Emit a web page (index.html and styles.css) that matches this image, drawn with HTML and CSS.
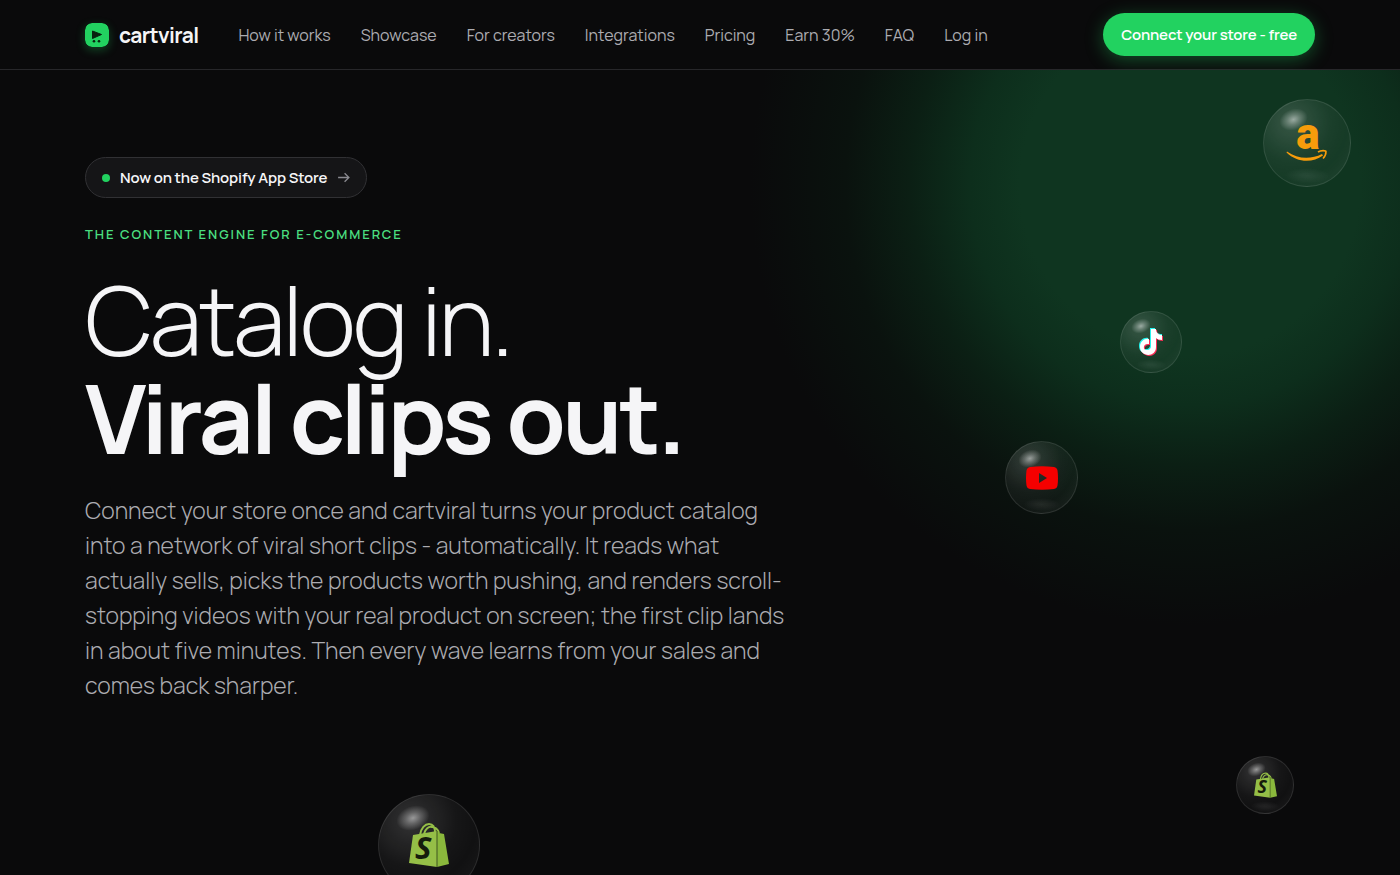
FILE: index.html
```html
<!DOCTYPE html>
<html lang="en">
<head>
  <meta charset="utf-8">
  <meta name="viewport" content="width=device-width, initial-scale=1">
  <title>cartviral</title>
  <link rel="stylesheet" href="styles.css">
</head>
<body>
  <header class="header">
    <div class="wrap header-inner">
      <a href="#" class="logo">
        <svg class="logo-mark" viewBox="0 0 24 24" aria-hidden="true">
          <rect width="24" height="24" rx="7" fill="#22d260"/>
          <path d="M7.500 8l9 3.500-9 4z" fill="#08210f" stroke="#08210f" stroke-linejoin="round"/>
          <circle cx="9" cy="18.300" r="1.300" fill="#08210f"/>
          <circle cx="14" cy="18.300" r="1.300" fill="#08210f"/>
        </svg>
        cartviral
      </a>
      <nav class="nav">
        <a href="#">How it works</a>
        <a href="#">Showcase</a>
        <a href="#">For creators</a>
        <a href="#">Integrations</a>
        <a href="#">Pricing</a>
        <a href="#">Earn 30%</a>
        <a href="#">FAQ</a>
        <a href="#">Log in</a>
      </nav>
      <button type="button" class="btn">Connect your store - free</button>
    </div>
  </header>

  <main class="hero">
    <div class="bubble amazon">
      <svg viewBox="0 0 42 80" aria-hidden="true">
        <text x="22" y="46" text-anchor="middle" class="amazon-letter">a</text>
        <path d="M1 48.500c11 8 24 8 35 2.500l1 1.500c-11 8-26 7-36.500-3z" fill="#f79c0b"/>
        <path d="M32 49c3-2 8-1.500 8-.5 0 2-1 5-3 7" fill="none" stroke="#f79c0b" stroke-width="1.600"/>
      </svg>
    </div>
    <div class="bubble tiktok">
      <svg viewBox="0 0 26 28" aria-hidden="true">
        <path d="M12 0h5c0 4 3 6 7 6v5c-3 0-5-1-7-2v9c0 11-16 10-16 0 0-6 5-9 9-8v5c-7-1-6 7-2 6 3 0 4-2 4-4z" fill="#25f4ee"/>
        <path d="M14 2h5c0 4 3 6 6 6v5c-3 0-5-1-6-2v9c0 11-16 10-16 0 0-6 5-9 9-8v5c-7-1-6 7-2 6 3 0 4-2 4-4z" fill="#fe2c55"/>
        <path d="M13 1h5c0 4 3 6 6 6v5c-3 0-5-1-6-2v9c0 11-16 10-16 0 0-6 5-9 9-8v5c-7-1-6 7-2 6 3 0 4-2 4-4z" fill="#fff"/>
      </svg>
    </div>
    <div class="bubble youtube">
      <svg viewBox="0 0 34 24" aria-hidden="true">
        <path fill-rule="evenodd" d="M5 1q12-1.500 24 0 3 .5 3.500 3.500 1 7.500 0 15Q32 22.500 29 23q-12 1.500-24 0-3-.5-3.500-3.500-1-7.500 0-15Q2 1.500 5 1zM14 7v10l8-5z" fill="#f50000"/>
      </svg>
    </div>
    <div class="bubble shop-large">
      <svg viewBox="0 0 40 46" aria-hidden="true">
        <g id="bag">
          <path d="M11 13C12 6 16 2 20 2c4 0 6 3 6 9M15 12c1-5 5-8 8-7 4 0 6 3 7 6" fill="none" stroke="#95bf47" stroke-width="2"/>
          <path d="M4 13l24-4v36L0 41z" fill="#95bf47"/>
          <path d="M28 9l2 2 5 1 5 30-12 3z" fill="#8ab83c"/>
          <path d="M28 9v36" stroke="#3f5520" stroke-width="1"/>
          <text x="6" y="37" class="shopify-letter">S</text>
        </g>
      </svg>
    </div>
    <div class="bubble shop-small"><svg viewBox="0 0 40 46" aria-hidden="true"><use href="#bag"/></svg></div>

    <div class="wrap hero-content">
      <a href="#" class="pill">
        <span class="dot"></span>
        Now on the Shopify App Store
        <svg class="arrow" viewBox="0 0 12 12" aria-hidden="true"><path d="M1 6h10M7 2l4 4-4 4"/></svg>
      </a>
      <p class="eyebrow">The content engine for e-commerce</p>
      <h1><span class="light">Catalog in.</span><br>Viral clips out.</h1>
      <p class="lead">Connect your store once and cartviral turns your product catalog into a network of viral short clips - automatically. It reads what actually sells, picks the products worth pushing, and renders scroll-stopping videos with your real product on screen; the first clip lands in about five minutes. Then every wave learns from your sales and comes back sharper.</p>
    </div>
  </main>
</body>
</html>
```
FILE: styles.css
```css
* {
  box-sizing: border-box;
}
body {
  margin: 0;
  min-height: 100vh;
  display: flex;
  flex-direction: column;
  background: #0a0a0b;
  color: #f5f5f7;
  font-family: Manrope, Inter, sans-serif;
}
a {
  color: inherit;
  text-decoration: none;
}
.wrap {
  width: 100%;
  max-width: 1278px;
  margin: 0 auto;
  padding: 0 24px;
}

/* header */
.header {
  border-bottom: 1px solid #27272a;
}
.header-inner {
  display: flex;
  align-items: center;
  height: 69px;
}
.logo {
  display: flex;
  align-items: center;
  gap: 10px;
  margin-right: 40px;
  font-size: 21px;
  font-weight: 700;
  letter-spacing: -0.03em;
}
.logo-mark {
  width: 24px;
  height: 24px;
  border-radius: 7px;
  box-shadow: 0 3px 10px rgba(34, 210, 96, 0.3);
}
.nav {
  display: flex;
  gap: 30px;
  color: #acacb1;
  font-size: 16px;
  white-space: nowrap;
}
.btn {
  height: 43px;
  margin-left: auto;
  padding: 0 18px;
  border: 0;
  border-radius: 22px;
  background: #22d260;
  box-shadow: 0 4px 18px rgba(34, 210, 96, 0.35);
  color: #fff;
  font: inherit;
  font-size: 15px;
  font-weight: 600;
  letter-spacing: -0.01em;
  white-space: nowrap;
  cursor: pointer;
}

/* hero */
.hero {
  position: relative;
  flex: 1;
  overflow: hidden;
  background: radial-gradient(circle at 85% 115px, #0f3520 170px, #0d2e1c 220px, #0b1f14 280px, #0a120e 345px, #0a0a0b 440px);
}
.hero-content {
  position: relative;
  padding-top: 87px;
}
.pill {
  display: inline-flex;
  align-items: center;
  gap: 10px;
  height: 41px;
  padding: 0 16px;
  border: 1px solid #313134;
  border-radius: 21px;
  background: #151517;
  font-size: 15px;
  font-weight: 600;
  letter-spacing: -0.01em;
}
.dot {
  width: 8px;
  height: 8px;
  border-radius: 50%;
  background: #22d260;
}
.arrow {
  width: 13px;
  height: 13px;
  fill: none;
  stroke: #8a8a90;
  stroke-width: 1.2;
}
.eyebrow {
  margin: 26px 0 27px;
  color: #4ade80;
  font-size: 13px;
  font-weight: 600;
  line-height: 20px;
  letter-spacing: 0.15em;
  text-transform: uppercase;
}
h1 {
  margin: 0;
  font-size: 96px;
  font-weight: 700;
  line-height: 98px;
  letter-spacing: -0.035em;
}
.light {
  font-weight: 300;
}
.lead {
  max-width: 714px;
  margin: 26px 0 0;
  color: #acacb1;
  font-size: 23px;
  font-weight: 300;
  line-height: 35px;
}

/* floating bubbles */
.bubble {
  position: absolute;
  display: flex;
  align-items: center;
  justify-content: center;
  border: 1px solid rgba(255, 255, 255, 0.1);
  border-radius: 50%;
  background:
    radial-gradient(ellipse 26% 9% at 50% 88%, rgba(255, 255, 255, 0.08), transparent),
    radial-gradient(circle at 32% 26%, rgba(255, 255, 255, 0.17), rgba(255, 255, 255, 0.05) 45%, rgba(255, 255, 255, 0.03) 65%, rgba(255, 255, 255, 0.08));
}
/* glass highlight */
.bubble::before {
  content: "";
  position: absolute;
  top: 11%;
  left: 17%;
  width: 34%;
  height: 24%;
  border-radius: 50%;
  background: radial-gradient(closest-side, rgba(255, 255, 255, 0.5), rgba(255, 255, 255, 0.25) 45%, transparent);
  transform: rotate(-20deg);
}
.bubble svg {
  display: block;
}
.amazon {
  top: 29px;
  right: 49px;
  width: 88px;
  height: 88px;
}
.amazon svg {
  width: 42px;
}
.amazon-letter {
  fill: #f79c0b;
  font: 900 44px Roboto, sans-serif;
}
.tiktok {
  top: 241px;
  left: 80%;
  width: 62px;
  height: 62px;
}
.tiktok svg {
  width: 26px;
}
.youtube {
  top: 371px;
  right: 23%;
  width: 73px;
  height: 73px;
}
.youtube svg {
  width: 34px;
}
.shop-small {
  right: 106px;
  bottom: 61px;
  width: 58px;
  height: 58px;
}
.shop-small svg {
  width: 23px;
}
.shop-large {
  left: 27%;
  bottom: -21px;
  width: 102px;
  height: 102px;
}
.shop-large svg {
  width: 40px;
}
.shopify-letter {
  fill: #151c0c;
  font: italic 700 31px "Open Sans", sans-serif;
}
```
